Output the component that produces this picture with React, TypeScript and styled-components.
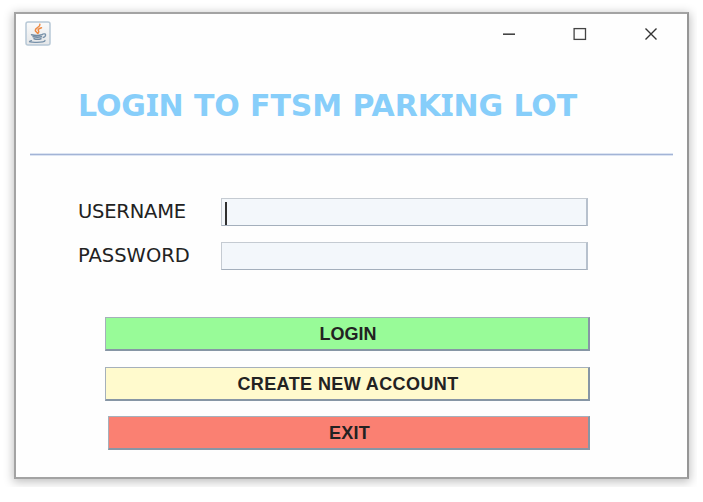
import React from "react";
import styled, { createGlobalStyle } from "styled-components";

const GlobalStyle = createGlobalStyle`
  * { box-sizing: border-box; }
  body { margin: 0; background: #fff; overflow: hidden; }
`;

const Desktop = styled.div`
  width: 703px;
  height: 502px;
  background: #fff;
`;

const Backdrop = styled.div`
  width: 697px;
  height: 487px;
  padding: 12px 8px 8px 14px;
  overflow: hidden;
`;

const Window = styled.main`
  width: 675px;
  height: 467px;
  display: flex;
  flex-direction: column;
  background: #fefefe;
  border: 2px solid #a3a3a3;
  border-right-color: #969696;
  box-shadow: 0 2px 9px 1px rgba(0, 0, 0, 0.25);
`;

const TitleBar = styled.header`
  height: 40px;
  padding: 7px 29px 0 9px;
  display: flex;
  justify-content: space-between;
  align-items: flex-start;
`;

const Controls = styled.div`
  display: flex;
  gap: 57px;
  padding-top: 6px;
`;

const Control = styled.button`
  width: 14px;
  height: 14px;
  padding: 0;
  border: 0;
  background: none;
  display: flex;
`;

const Heading = styled.h1`
  margin: 0;
  height: 99px;
  padding: 31px 0 0 62px;
  font: 700 30px/42px "DejaVu Sans", Verdana, sans-serif;
  letter-spacing: -0.1px;
  color: #87cefa;
  white-space: nowrap;
`;

const SerifedI = styled.span`
  font-family: "Noto Sans", sans-serif;
  font-weight: 800;
  font-size: 31px;
  line-height: 1;
`;

const Divider = styled.hr`
  width: 643px;
  height: 3px;
  margin: 0 0 0 14px;
  border: solid #dce4f2;
  border-width: 1px 0;
  background: #a3b4d6;
`;

const Form = styled.form`
  display: flex;
  flex-direction: column;
`;

const Fields = styled.div`
  padding: 42px 0 0 62px;
  display: grid;
  grid-template-columns: 143px 367px;
  row-gap: 16px;
`;

const Label = styled.label<{ $spacing: number }>`
  font: 400 19.5px/28px "DejaVu Sans", Tahoma, sans-serif;
  letter-spacing: ${(p) => p.$spacing}px;
  color: #222;
`;

const Field = styled.div`
  height: 28px;
  padding: 3px 0 0 3px;
  background: #f3f7fb;
  border: 1px solid #c5cbd2;
  border-bottom-color: #a4afbc;
  border-right: 2px solid #b7c1cd;
`;

const Caret = styled.span`
  display: block;
  width: 1.5px;
  height: 23px;
  background: #303030;
`;

const Actions = styled.div`
  padding: 47px 0 0 89px;
  width: 574px;
  display: flex;
  flex-direction: column;
  align-items: flex-end;
  gap: 15.5px;
`;

const ActionButton = styled.button<{ $fill: string; $width: number; $spacing?: number }>`
  width: ${(p) => p.$width}px;
  height: 34px;
  padding: 2px 0 0 2px;
  border: 1px solid #a5b0bb;
  border-right: 2px solid #8796a5;
  border-bottom: 2px solid #8796a5;
  background: ${(p) => p.$fill};
  color: #222;
  font: 700 18px/29px "Liberation Sans", Arial, sans-serif;
  letter-spacing: ${(p) => p.$spacing ?? 0}px;
  text-align: center;
`;

function JavaIcon() {
  return (
    <svg width="26" height="25" viewBox="0 0 26 25" fill="none">
      <defs>
        <linearGradient id="tile" x1="0" y1="0" x2="0" y2="1">
          <stop stopColor="#fbfbfb" />
          <stop offset="1" stopColor="#e4e6e8" />
        </linearGradient>
      </defs>
      <rect x="1" y="1" width="24" height="23" rx="2" fill="url(#tile)" stroke="#b7c8d6" strokeWidth="1.5" />
      <path d="M14.9 3.3c.6 3-5.2 3.6-4.6 6.2.3 1.2 1.6 1.6 2.3 2.9M16.5 6.7c-3.2 1-4.1 2-2.9 3.3.6.8.2 1.4-.5 2.1" stroke="#ee8a43" strokeWidth="1.5" strokeLinecap="round" />
      <path d="M6.5 13.7c3 .9 7.5.9 10.8-.1M8 15.7c3 .6 6 .6 8.5 0M9 17.7c2.5.8 4.8.7 7 0" stroke="#7189a1" strokeWidth="1.5" strokeLinecap="round" />
      <path d="M17.5 13.1c4.2-1.2 4 2.2.2 3.5" stroke="#7892aa" strokeWidth="1.3" />
      <path d="M6.5 19.7c-4.5.9-.8 1.8 5.5 1.6 4.6 0 8.2-.6 8-1.8" stroke="#7892aa" strokeWidth="1.3" strokeLinecap="round" />
    </svg>
  );
}

export default function App() {
  return (
    <Desktop>
      <GlobalStyle />
      <Backdrop>
        <Window>
          <TitleBar>
            <JavaIcon />
            <Controls>
              <Control aria-label="Minimize">
                <svg width="14" height="14"><path d="M1 7.2h12" stroke="#444" strokeWidth="1.6" /></svg>
              </Control>
              <Control aria-label="Maximize">
                <svg width="14" height="14"><rect x="1.1" y="1.6" width="11.4" height="10.8" fill="none" stroke="#444" strokeWidth="1.3" /></svg>
              </Control>
              <Control aria-label="Close">
                <svg width="14" height="14"><path d="M1.5 1.5l11 11M12.5 1.5l-11 11" stroke="#333" strokeWidth="1.4" /></svg>
              </Control>
            </Controls>
          </TitleBar>
          <Heading>
            LOG<SerifedI>I</SerifedI>N TO FTSM PARK<SerifedI>I</SerifedI>NG LOT
          </Heading>
          <Divider />
          <Form>
            <Fields>
              <Label $spacing={-0.2}>USERNAME</Label>
              <Field><Caret /></Field>
              <Label $spacing={0}>PASSWORD</Label>
              <Field />
            </Fields>
            <Actions>
              <ActionButton type="button" $width={485} $fill="#98fb98">LOGIN</ActionButton>
              <ActionButton type="button" $width={485} $fill="#fffacd" $spacing={0.4}>CREATE NEW ACCOUNT</ActionButton>
              <ActionButton type="button" $width={482} $fill="#fa8072" $spacing={0.3}>EXIT</ActionButton>
            </Actions>
          </Form>
        </Window>
      </Backdrop>
    </Desktop>
  );
}
